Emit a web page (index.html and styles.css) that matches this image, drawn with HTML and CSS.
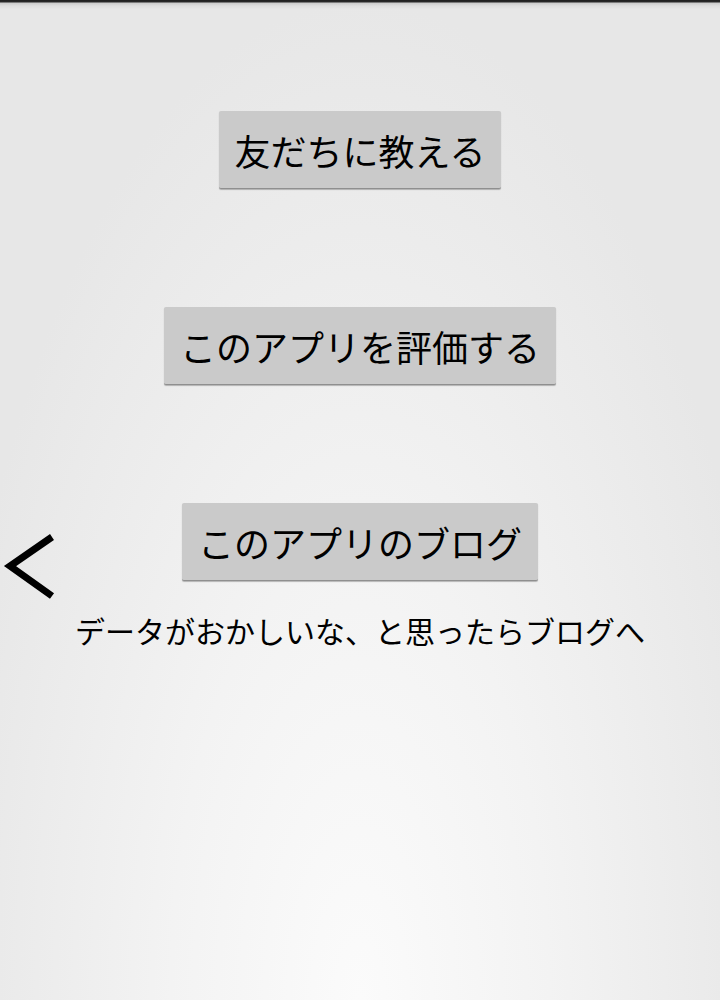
FILE: index.html
```html
<!DOCTYPE html>
<html lang="ja">
<head>
<meta charset="utf-8">
<link rel="stylesheet" href="styles.css">
</head>
<body>
<div class="topshade"></div>
<main class="menu">
  <div class="btn">友だちに教える</div>
  <div class="btn">このアプリを評価する</div>
  <div class="btn">このアプリのブログ</div>
  <p class="caption">データがおかしいな、と思ったらブログへ</p>
</main>
<svg class="back" width="56" height="70" viewBox="0 0 56 70">
  <polyline points="50,4 8,33 50,63" fill="none" stroke="#000" stroke-width="7" stroke-linecap="butt" stroke-linejoin="miter"/>
</svg>
</body>
</html>
```
FILE: styles.css
```css
html, body {
  margin: 0;
  padding: 0;
}
body {
  width: 720px;
  height: 1000px;
  overflow: hidden;
  position: relative;
  font-family: "Noto Sans CJK JP", "Noto Sans", sans-serif;
  color: #000;
  background: radial-gradient(ellipse 420px 1000px at 360px 1000px, #fbfbfb 0%, #f3f3f3 45%, #e7e7e7 100%);
  background-color: #e6e6e6;
}
.topshade {
  height: 10px;
  background: linear-gradient(to bottom, #1e1e1e 0px, #2a2a2a 2px, rgba(0,0,0,0.12) 3px, rgba(0,0,0,0.04) 6px, rgba(0,0,0,0) 10px);
}
.menu {
  display: flex;
  flex-direction: column;
  align-items: center;
  padding-top: 101px;
  gap: 118px;
}
.btn {
  height: 77px;
  padding: 0 16px;
  display: flex;
  align-items: center;
  justify-content: center;
  font-size: 36px;
  line-height: 1;
  background: #cacaca;
  border-radius: 2px;
  border-bottom: 1px solid #8f8f8f;
  box-shadow: 0 1px 1px rgba(0,0,0,0.25);
  white-space: nowrap;
}
.caption {
  margin: -87px 0 0;
  font-size: 30px;
  line-height: 36px;
  white-space: nowrap;
}
.back {
  position: absolute;
  left: 2px;
  top: 533px;
}
```
